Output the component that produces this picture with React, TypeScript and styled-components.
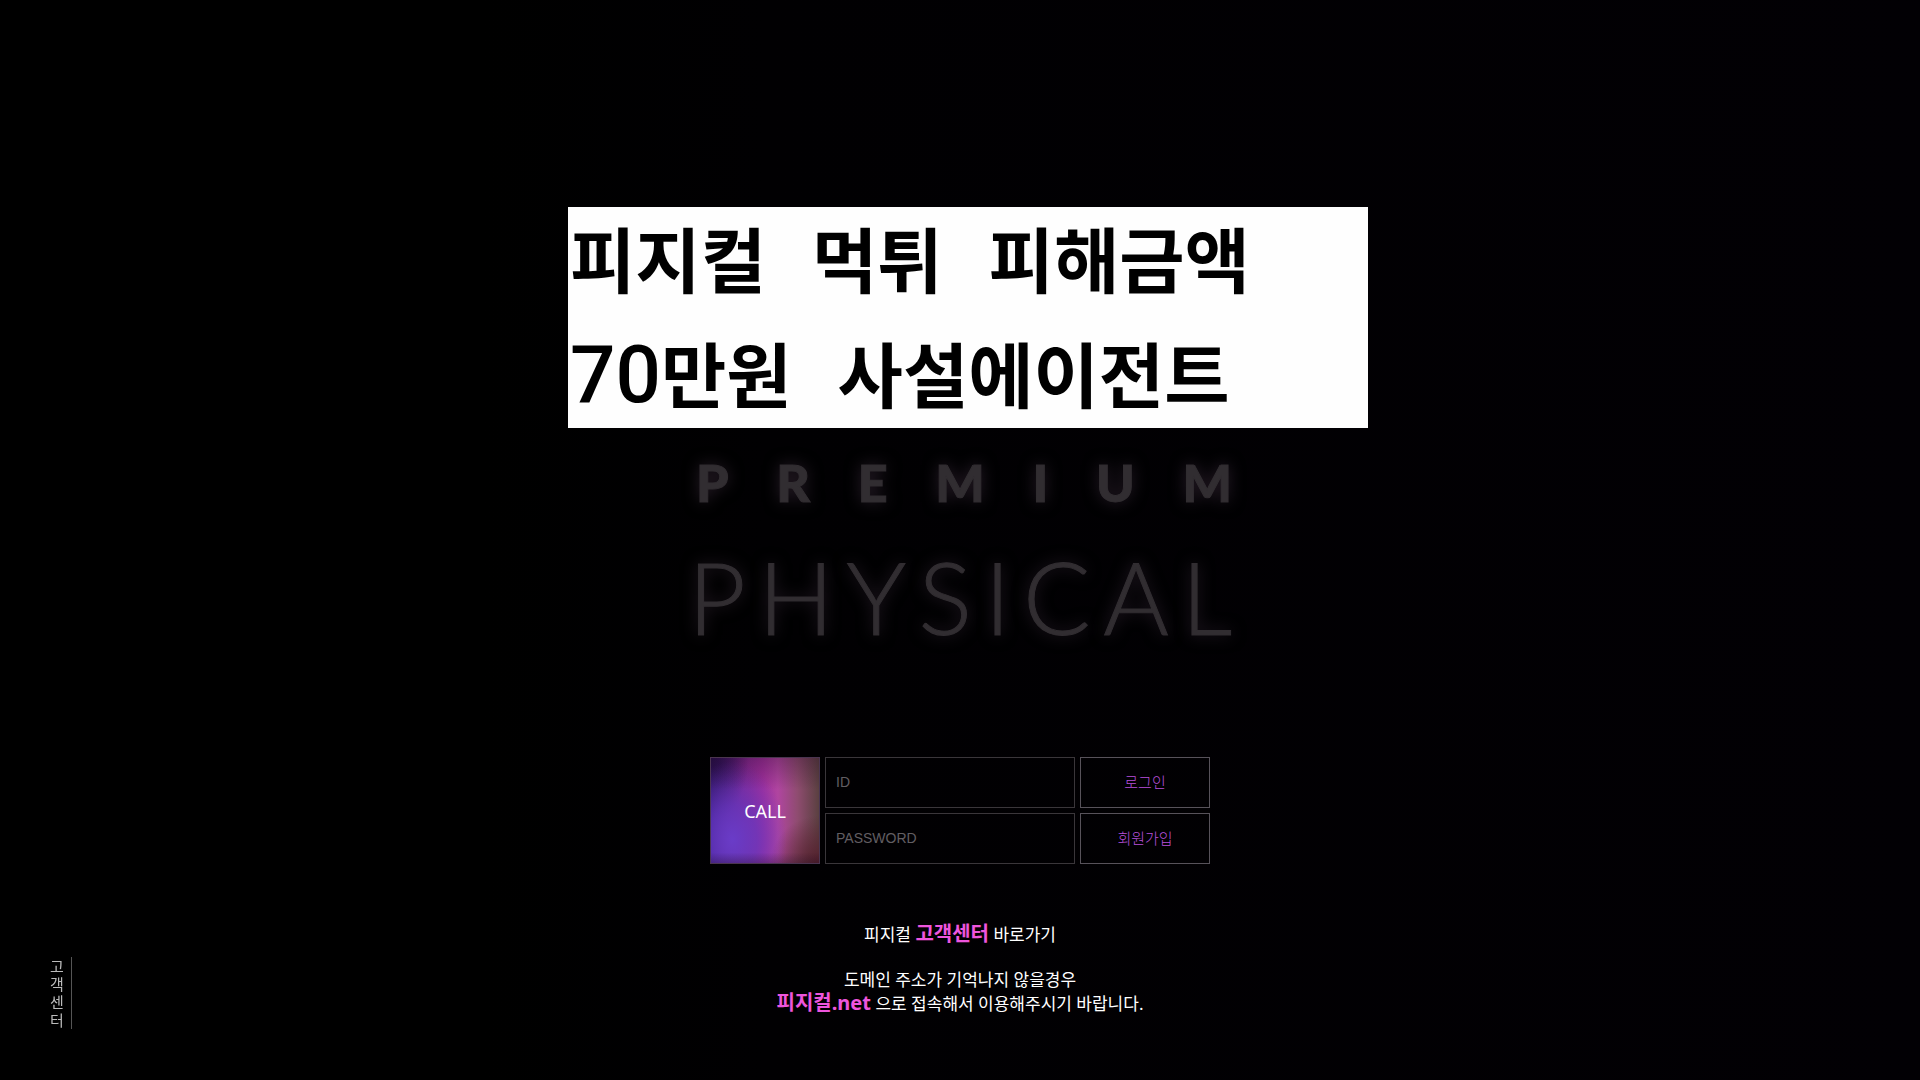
import React from "react";
import styled, { createGlobalStyle } from "styled-components";

const GlobalStyle = createGlobalStyle`
  * { box-sizing: border-box; }
  body {
    margin: 0;
    background: #000;
    color: #fff;
    font-family: "Noto Sans", "Noto Sans CJK KR", sans-serif;
  }
`;

const Page = styled.main`
  min-height: 100vh;
  padding: 207px 16px 48px;
  display: flex;
  flex-direction: column;
  align-items: center;
  background: linear-gradient(90deg, #000 25%, #010002 40%, #020004 100%);
`;

const BannerArea = styled.div`
  width: 100%;
  max-width: 816px;
  padding-left: 16px;
`;

const Banner = styled.h1`
  display: grid;
  gap: 17px;
  margin: 0;
  padding: 0 2px 8px;
  background: #fefefe;
  color: #000;
  font: 700 71px/98px "Noto Sans CJK KR", sans-serif;
`;

const BannerLine = styled.span`
  display: flex;
  gap: 46px;
  height: 98px;
  white-space: nowrap;
`;

const Digits = styled.span`
  font-family: Roboto, "Liberation Sans", sans-serif;
  font-size: 80px;
  font-weight: 500;
`;

const Logo = styled.div`
  width: 100%;
  max-width: 544px;
  margin-top: 24px;
  padding-left: 8px;
  color: #312d31;
  font-family: Lato, sans-serif;
  text-shadow: 0 0 16px #2c202c;
`;

const LogoRow = styled.div`
  display: flex;
  justify-content: space-between;
`;

const LogoTop = styled(LogoRow)`
  font-size: 52px;
  line-height: 60px;
  font-weight: 900;
  -webkit-text-stroke: 1px #312d31;
`;

const LogoName = styled(LogoRow)`
  margin: 28px 0 0 -8px;
  font-size: 100px;
  line-height: 112px;
  font-weight: 300;
  -webkit-text-stroke: 1px #312d31;
`;

const LoginForm = styled.form`
  display: grid;
  grid-template-columns: 110px 250px 130px;
  grid-template-rows: 51px 51px;
  gap: 5px;
  margin: 105px 0 0;
`;

const CallButton = styled.button`
  grid-row: 1 / 3;
  border: 1px solid #4b3550;
  padding: 0;
  color: #fff;
  font: 400 18px "Noto Sans", sans-serif;
  background:
    linear-gradient(180deg, rgba(30, 5, 30, 0.3) 0%, transparent 30%, transparent 90%, rgba(30, 10, 30, 0.3) 100%),
    radial-gradient(ellipse 50% 75% at 20% 78%, #6a3cc8 0%, rgba(100, 56, 195, 0.7) 45%, transparent 100%),
    radial-gradient(ellipse 35% 60% at 0% 0%, #28104a 0%, transparent 100%),
    radial-gradient(ellipse 45% 45% at 100% 100%, #55202e 0%, transparent 100%),
    linear-gradient(90deg, #3c1a80 0%, #80278f 28%, #a0309c 48%, #b045a0 62%, #8f4c70 80%, #5a4040 100%);
`;

const Field = styled.input`
  width: 100%;
  padding: 0 10px 2px;
  border: 1px solid #3a363a;
  border-radius: 0;
  background: transparent;
  color: #ccc;
  font: 14px "Liberation Sans", Arial, sans-serif;
  &::placeholder { color: #625e62; opacity: 1; }
`;

const ActionButton = styled.button`
  padding: 0 0 3px;
  border: 1px solid #57525a;
  background: transparent;
  color: #b850dc;
  font: 300 15px "Noto Sans CJK KR", sans-serif;
`;

const Notice = styled.p`
  margin: 21px 0 0;
  text-align: center;
  font-size: 17px;
  line-height: 24px;
`;

const SupportNotice = styled(Notice)`
  margin-top: 59px;
`;

const Accent = styled.a`
  color: #ee55dd;
  font-size: 20px;
  line-height: 20px;
  font-weight: 700;
  text-decoration: none;
`;

const SideLink = styled.a`
  position: fixed;
  left: 50px;
  bottom: 51px;
  width: 22px;
  padding-right: 7px;
  border-right: 1px solid #555;
  color: #bbb;
  font: 15px/18px "Noto Sans CJK KR", sans-serif;
  text-decoration: none;
  word-break: break-all;
`;

const spread = (word: string) => word.split("").map((c, i) => <span key={i}>{c}</span>);

export default function App() {
  return (
    <>
      <GlobalStyle />
      <Page lang="ko">
        <BannerArea>
          <Banner>
            <BannerLine>
              <span>피지컬</span>
              <span>먹튀</span>
              <span>피해금액</span>
            </BannerLine>
            <BannerLine>
              <span><Digits>70</Digits>만원</span>
              <span>사설에이전트</span>
            </BannerLine>
          </Banner>
        </BannerArea>
        <Logo>
          <LogoTop>{spread("PREMIUM")}</LogoTop>
          <LogoName>{spread("PHYSICAL")}</LogoName>
        </Logo>
        <LoginForm onSubmit={(e) => e.preventDefault()}>
          <CallButton type="button">CALL</CallButton>
          <Field type="text" aria-label="ID" placeholder="ID" />
          <ActionButton type="submit">로그인</ActionButton>
          <Field type="password" aria-label="PASSWORD" placeholder="PASSWORD" />
          <ActionButton type="button">회원가입</ActionButton>
        </LoginForm>
        <SupportNotice>
          피지컬 <Accent href="#support">고객센터</Accent> 바로가기
        </SupportNotice>
        <Notice>
          도메인 주소가 기억나지 않을경우
          <br />
          <Accent href="#domain">피지컬.net</Accent> 으로 접속해서 이용해주시기 바랍니다.
        </Notice>
      </Page>
      <SideLink href="#support">고객센터</SideLink>
    </>
  );
}
